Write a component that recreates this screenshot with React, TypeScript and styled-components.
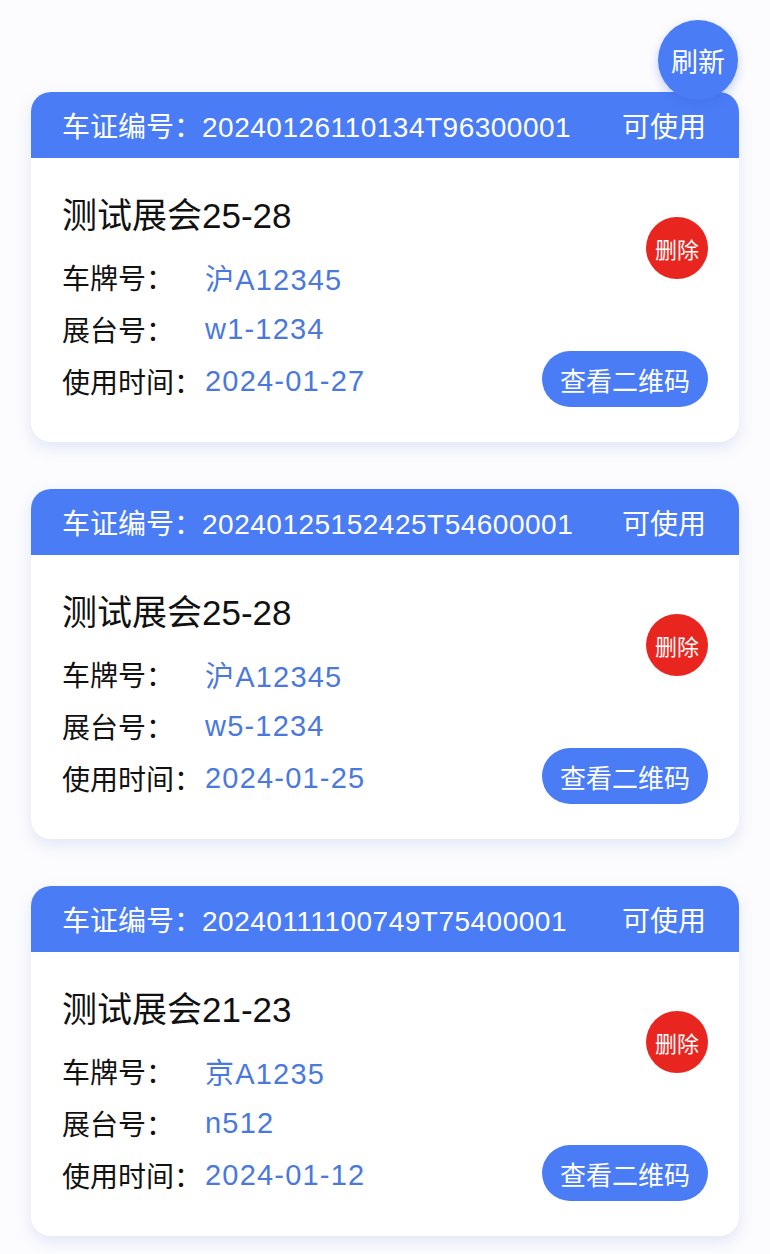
import React from 'react';
import styled, {createGlobalStyle} from 'styled-components';

interface Pass {
  code: string;
  status: string;
  title: string;
  plate: string;
  booth: string;
  date: string;
}

const passes: Pass[] = [
  {code: '20240126110134T96300001', status: '可使用', title: '测试展会25-28', plate: '沪A12345', booth: 'w1-1234', date: '2024-01-27'},
  {code: '20240125152425T54600001', status: '可使用', title: '测试展会25-28', plate: '沪A12345', booth: 'w5-1234', date: '2024-01-25'},
  {code: '20240111100749T75400001', status: '可使用', title: '测试展会21-23', plate: '京A1235', booth: 'n512', date: '2024-01-12'},
];

const GlobalStyle = createGlobalStyle`
  body {
    margin: 0;
    background: #fcfcfe;
    font-family: "Liberation Sans", "Noto Sans CJK SC", sans-serif;
  }
`;

const App = () => {
  return (
    <>
      <GlobalStyle />
      <Page>
        <RefreshButton>刷新</RefreshButton>
        {passes.map(p => (
          <Card key={p.code}>
            <CardHeader>
              <span>
                车证编号：<Code>{p.code}</Code>
              </span>
              <span>{p.status}</span>
            </CardHeader>
            <CardBody>
              <Info>
                <Title>{p.title}</Title>
                <Rows>
                  <Row>
                    <Label>车牌号：</Label>
                    <Value>{p.plate}</Value>
                  </Row>
                  <Row>
                    <Label>展台号：</Label>
                    <Value>{p.booth}</Value>
                  </Row>
                  <Row>
                    <Label>使用时间：</Label>
                    <Value>{p.date}</Value>
                  </Row>
                </Rows>
              </Info>
              <Actions>
                <DeleteButton>删除</DeleteButton>
                <QrButton>查看二维码</QrButton>
              </Actions>
            </CardBody>
          </Card>
        ))}
      </Page>
    </>
  );
};

export default App;

const Page = styled.div`
  position: relative;
  display: flex;
  flex-direction: column;
  gap: 47px;
  padding: 92px 31px 20px;
`;

const RefreshButton = styled.div`
  position: absolute;
  top: 20px;
  right: 32px;
  z-index: 2;
  width: 80px;
  height: 80px;
  border-radius: 50%;
  background: #4a7cf6;
  color: #fff;
  font-size: 27px;
  display: flex;
  align-items: center;
  justify-content: center;
  box-shadow: 0 4px 10px rgba(60, 100, 220, 0.3);
`;

const Card = styled.div`
  background: #fff;
  border-radius: 20px;
  overflow: hidden;
  box-shadow: 0 6px 16px rgba(90, 120, 210, 0.16);
`;

const CardHeader = styled.div`
  height: 66px;
  background: #4a7cf6;
  color: #fff;
  font-size: 28px;
  display: flex;
  align-items: center;
  justify-content: space-between;
  padding: 0 33px 0 31px;
`;

const Code = styled.span`
  letter-spacing: 0.5px;
`;

const CardBody = styled.div`
  display: flex;
  justify-content: space-between;
  padding: 40px 31px 35px;
`;

const Info = styled.div`
  display: flex;
  flex-direction: column;
  gap: 17px;
`;

const Title = styled.div`
  font-size: 35px;
  line-height: 36px;
  color: #111;
`;

const Rows = styled.div`
  display: flex;
  flex-direction: column;
`;

const Row = styled.div`
  display: flex;
  align-items: center;
  height: 52px;
  font-size: 28px;
`;

const Label = styled.span`
  width: 143px;
  color: #111;
`;

const Value = styled.span`
  color: #4a79db;
  font-size: 29px;
  letter-spacing: 1.2px;
`;

const Actions = styled.div`
  display: flex;
  flex-direction: column;
  justify-content: space-between;
  align-items: flex-end;
  padding-top: 19px;
`;

const DeleteButton = styled.div`
  width: 62px;
  height: 62px;
  border-radius: 50%;
  background: #e8261f;
  color: #fff;
  font-size: 22px;
  display: flex;
  align-items: center;
  justify-content: center;
`;

const QrButton = styled.div`
  height: 56px;
  padding: 0 18px;
  border-radius: 28px;
  background: #4a7cf6;
  color: #fff;
  font-size: 26px;
  display: flex;
  align-items: center;
`;
